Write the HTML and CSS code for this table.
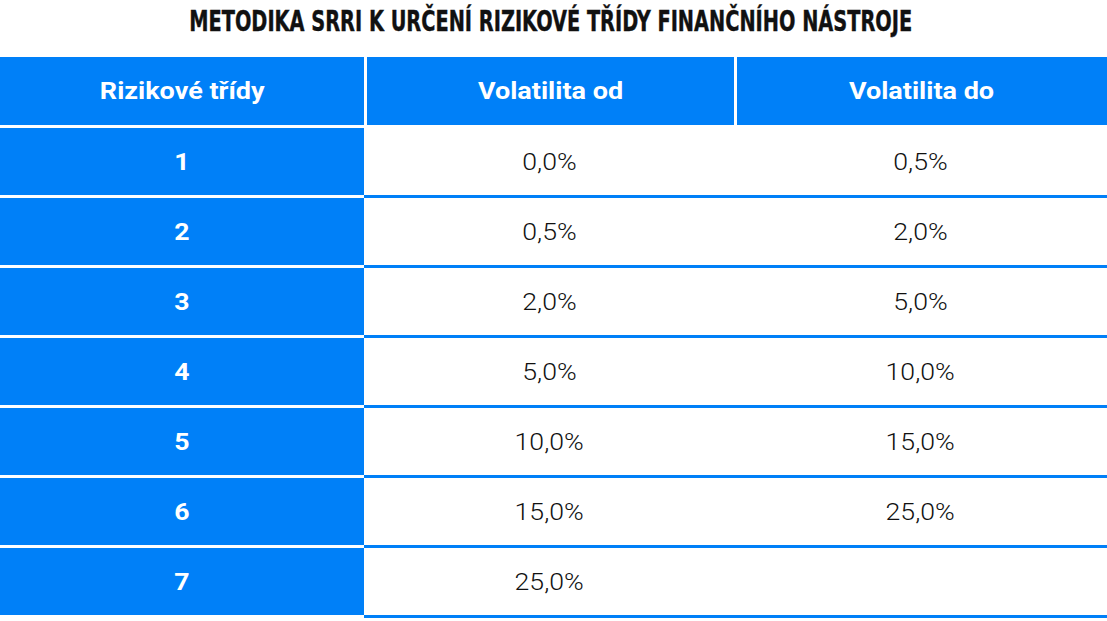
FILE: index.html
```html
<!DOCTYPE html>
<html lang="cs">
<head>
<meta charset="utf-8">
<title>Metodika SRRI</title>
<link rel="stylesheet" href="styles.css">
</head>
<body>
<div class="page">
  <h1 class="title"><span class="title-text">METODIKA SRRI K URČENÍ RIZIKOVÉ TŘÍDY FINANČNÍHO NÁSTROJE</span></h1>
  <div class="table">
    <div class="th first"><span class="tx">Rizikové třídy</span></div>
    <div class="th"><span class="tx">Volatilita od</span></div>
    <div class="th"><span class="tx">Volatilita do</span></div>

    <div class="td cls"><span class="tx">1</span></div><div class="td"><span class="tx">0,0%</span></div><div class="td"><span class="tx">0,5%</span></div>
    <div class="td cls"><span class="tx">2</span></div><div class="td"><span class="tx">0,5%</span></div><div class="td"><span class="tx">2,0%</span></div>
    <div class="td cls"><span class="tx">3</span></div><div class="td"><span class="tx">2,0%</span></div><div class="td"><span class="tx">5,0%</span></div>
    <div class="td cls"><span class="tx">4</span></div><div class="td"><span class="tx">5,0%</span></div><div class="td"><span class="tx">10,0%</span></div>
    <div class="td cls"><span class="tx">5</span></div><div class="td"><span class="tx">10,0%</span></div><div class="td"><span class="tx">15,0%</span></div>
    <div class="td cls"><span class="tx">6</span></div><div class="td"><span class="tx">15,0%</span></div><div class="td"><span class="tx">25,0%</span></div>
    <div class="td cls"><span class="tx">7</span></div><div class="td"><span class="tx">25,0%</span></div><div class="td"></div>
  </div>
</div>
</body>
</html>
```
FILE: styles.css
```css
html, body {
  margin: 0;
  padding: 0;
  background: #ffffff;
}

.page {
  width: 1107px;
}

.title {
  margin: 0;
  height: 57px;
  display: flex;
  justify-content: center;
  align-items: flex-start;
  font-family: "Liberation Sans Narrow", "DejaVu Sans Condensed", sans-serif;
  font-weight: 700;
  font-size: 28px;
  line-height: 44px;
  color: #111111;
}

.title-text {
  display: inline-block;
  white-space: nowrap;
  transform: translateX(-3px) scaleX(0.768);
  -webkit-text-stroke: 0.4px #111111;
}

.table {
  display: grid;
  grid-template-columns: 364px 370px 373px;
  font-family: Roboto, "Noto Sans", sans-serif;
  font-size: 24px;
}

.tx {
  display: inline-block;
  white-space: nowrap;
  transform: scaleX(1.11);
}

.th {
  height: 68px;
  background: #0080f8;
  color: #ffffff;
  font-weight: 700;
  display: flex;
  align-items: center;
  justify-content: center;
  border-left: 3px solid #ffffff;
  border-bottom: 3px solid #ffffff;
}

.th .tx {
  transform: scaleX(1.125);
}

.th.first {
  border-left: none;
}

.td {
  height: 67px;
  display: flex;
  align-items: center;
  justify-content: center;
  color: #111111;
  font-weight: 300;
  background: #ffffff;
  border-bottom: 3px solid #0080f8;
}

.td.cls {
  background: #0080f8;
  color: #ffffff;
  font-weight: 700;
  border-bottom-color: #ffffff;
}
```
